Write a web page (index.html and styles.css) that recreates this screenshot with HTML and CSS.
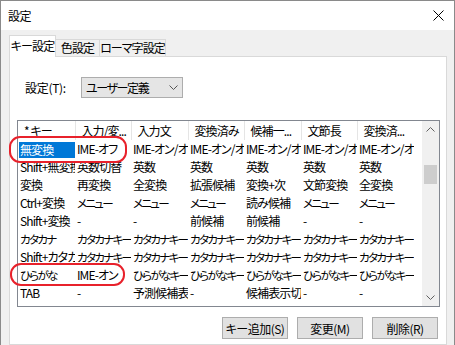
FILE: index.html
```html
<!DOCTYPE html>
<html lang="ja">
<head>
<meta charset="utf-8">
<title>設定</title>
<link rel="stylesheet" href="styles.css">
</head>
<body>
<div class="window">
  <div class="titlebar">
    <span class="title">設定</span>
    <svg class="close" width="11" height="11" viewBox="0 0 11 11"><path d="M0.5 0.5 L10.5 10.5 M10.5 0.5 L0.5 10.5" stroke="#000" stroke-width="1" fill="none"/></svg>
  </div>
  <div class="body">
    <div class="tabs">
      <div class="tab active">キー設定</div>
      <div class="tab t2">色設定</div>
      <div class="tab t3">ローマ字設定</div>
    </div>
    <div class="panel">
      <div class="setrow">
        <span class="label">設定(T):</span>
        <div class="select">
          <span class="seltext">ユーザー定義</span>
          <svg width="9" height="5" viewBox="0 0 9 5"><path d="M0.5 0.5 L4.5 4.5 L8.5 0.5" stroke="#555" stroke-width="1" fill="none"/></svg>
        </div>
      </div>
      <div class="list">
        <div class="listmain">
          <table class="grid">
            <colgroup>
              <col class="c57"><col class="c56"><col class="c57"><col class="c56"><col class="c57"><col class="c56"><col class="c57">
            </colgroup>
            <thead>
              <tr><th>* キー</th><th>入力/変...</th><th>入力文</th><th>変換済み</th><th>候補一...</th><th>文節長</th><th class="last">変換済...</th></tr>
            </thead>
            <tbody>
              <tr><td class="selcell"><div class="sel">無変換</div></td><td>IME-オフ</td><td>IME-オン/オフ</td><td>IME-オン/オフ</td><td>IME-オン/オフ</td><td>IME-オン/オフ</td><td>IME-オン/オフ</td></tr>
              <tr><td>Shift+無変換</td><td>英数切替</td><td>英数</td><td>英数</td><td>英数</td><td>英数</td><td>英数</td></tr>
              <tr><td>変換</td><td>再変換</td><td>全変換</td><td>拡張候補</td><td>変換+次</td><td>文節変換</td><td>全変換</td></tr>
              <tr><td>Ctrl+変換</td><td class="kn">メニュー</td><td class="kn">メニュー</td><td class="kn">メニュー</td><td>読み候補</td><td class="kn">メニュー</td><td class="kn">メニュー</td></tr>
              <tr><td>Shift+変換</td><td>-</td><td>-</td><td>前候補</td><td>前候補</td><td>-</td><td>-</td></tr>
              <tr><td class="kn">カタカナ</td><td class="kn">カタカナキー</td><td class="kn">カタカナキー</td><td class="kn">カタカナキー</td><td class="kn">カタカナキー</td><td class="kn">カタカナキー</td><td class="kn">カタカナキー</td></tr>
              <tr><td>Shift+カタカナ</td><td class="kn">カタカナキー</td><td class="kn">カタカナキー</td><td class="kn">カタカナキー</td><td class="kn">カタカナキー</td><td class="kn">カタカナキー</td><td class="kn">カタカナキー</td></tr>
              <tr><td class="kn">ひらがな</td><td>IME-オン</td><td class="kn">ひらがなキー</td><td class="kn">ひらがなキー</td><td class="kn">ひらがなキー</td><td class="kn">ひらがなキー</td><td class="kn">ひらがなキー</td></tr>
              <tr><td>TAB</td><td>-</td><td>予測候補表示</td><td>-</td><td>候補表示切替</td><td>-</td><td>-</td></tr>
            </tbody>
          </table>
        </div>
        <div class="vscroll">
          <svg class="arrow" width="17" height="17" viewBox="0 0 17 17"><path d="M4.5 10.5 L8.5 6.5 L12.5 10.5" stroke="#606060" stroke-width="1" fill="none"/></svg>
          <div class="track"><div class="thumb"></div></div>
          <svg class="arrow" width="17" height="17" viewBox="0 0 17 17"><path d="M4.5 6.5 L8.5 10.5 L12.5 6.5" stroke="#606060" stroke-width="1" fill="none"/></svg>
        </div>
      </div>
      <div class="buttons">
        <div class="btn">キー追加(S)</div>
        <div class="btn">変更(M)</div>
        <div class="btn">削除(R)</div>
      </div>
    </div>
  </div>
  <div class="mark m1"></div>
  <div class="mark m2"></div>
</div>
</body>
</html>
```

FILE: styles.css
```css
* { box-sizing: border-box; }

body {
  margin: 0;
  font-family: "Noto Sans CJK JP", "Noto Sans", sans-serif;
  font-size: 12px;
  color: #000;
  font-feature-settings: "palt";
  letter-spacing: -0.9px;
}

.window {
  position: relative;
  width: 455px;
  height: 345px;
  border: 1px solid #8a8a8a;
  border-bottom: none;
  background: #f0f0f0;
  overflow: hidden;
  display: flex;
  flex-direction: column;
}

.titlebar {
  height: 29px;
  flex-shrink: 0;
  background: #fff;
  display: flex;
  align-items: center;
  justify-content: space-between;
  padding: 0 10px 0 7px;
}

.title { letter-spacing: -0.5px; }

.close { display: block; }

.body {
  flex: 1;
  display: flex;
  flex-direction: column;
  padding: 5px 0 0 8px;
}

.tabs {
  display: flex;
  align-items: flex-end;
  height: 22px;
  margin-bottom: -1px;
  position: relative;
  z-index: 1;
}

.tab {
  height: 18px;
  line-height: 16px;
  text-align: center;
  border: 1px solid #d9d9d9;
  border-left: none;
  background: #f0f0f0;
  white-space: nowrap;
}

.tab.active {
  width: 47px;
  height: 22px;
  line-height: 20px;
  background: #fff;
  border-left: 1px solid #d9d9d9;
  border-bottom: none;
}

.tab.t2 { width: 44px; }
.tab.t3 { width: 66px; }

.panel {
  flex: 1;
  width: 438px;
  background: #fff;
  border: 1px solid #d9d9d9;
  padding: 20px 6px 0 7px;
}

.setrow {
  display: flex;
  align-items: center;
  padding-left: 8px;
  height: 20px;
}

.label { width: 56px; letter-spacing: -0.3px; }

.select {
  width: 102px;
  height: 21px;
  background: #e5e5e5;
  border: 1px solid #adadad;
  display: flex;
  align-items: center;
  justify-content: space-between;
  padding: 0 4px 0 4px;
}

.seltext { letter-spacing: -1.4px; }

.list {
  margin-top: 23px;
  width: 423px;
  height: 187px;
  border: 1px solid #828790;
  display: flex;
}

.listmain {
  flex: 1;
  overflow: hidden;
}

.grid {
  border-collapse: collapse;
  table-layout: fixed;
  width: 396px;
}

.c57 { width: 57px; }
.c56 { width: 56px; }

.grid th {
  height: 19px;
  padding: 0 0 0 6px;
  font-weight: normal;
  text-align: left;
  white-space: nowrap;
  overflow: hidden;
  border-right: 1px solid #e5e5e5;
  line-height: 18px;
}

.grid th.last { border-right: none; }

.grid td {
  height: 18px;
  padding: 0 0 0 2px;
  white-space: nowrap;
  overflow: hidden;
  line-height: 18px;
}

.grid td.kn {
  font-size: 11.5px;
  letter-spacing: -1.7px;
}

.grid td.selcell { padding: 0 0 0 1px; }

.sel {
  height: 16px;
  line-height: 16px;
  margin-top: 1px;
  padding-left: 1px;
  background: #0078d7;
  color: #fff;
}

.vscroll {
  width: 17px;
  background: #f0f0f0;
  display: flex;
  flex-direction: column;
}

.arrow { display: block; flex-shrink: 0; }

.track {
  flex: 1;
  padding: 27px 2px 0 2px;
}

.thumb {
  height: 19px;
  background: #cdcdcd;
}

.buttons {
  display: flex;
  justify-content: flex-end;
  gap: 9px;
  margin-top: 10px;
  padding-right: 2px;
}

.btn {
  width: 66px;
  height: 22px;
  background: #e1e1e1;
  border: 1px solid #adadad;
  display: flex;
  align-items: center;
  justify-content: center;
  white-space: nowrap;
  letter-spacing: -0.5px;
}

.mark {
  position: absolute;
  border: 2px solid #e8212b;
  border-radius: 11px;
}

.m1 { left: 8px; top: 135px; width: 118px; height: 27px; }
.m2 { left: 9px; top: 262px; width: 115px; height: 23px; }
```
